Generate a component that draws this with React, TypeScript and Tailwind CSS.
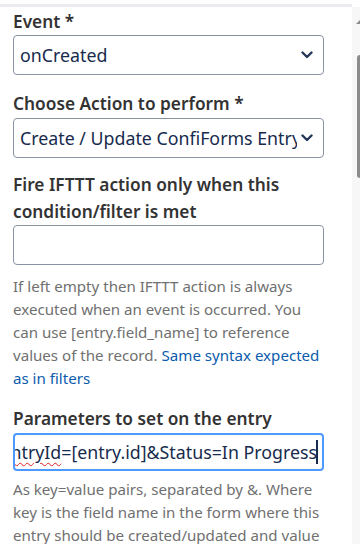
import React from "react";

function Chevron() {
  return (
    <svg width="12" height="8" viewBox="0 0 12 8" className="shrink-0">
      <path d="M1.5 1.5 L6 6 L10.5 1.5" fill="none" stroke="#253858" strokeWidth="2.4" strokeLinecap="round" strokeLinejoin="round" />
    </svg>
  );
}

function Select({ value }: { value: string }) {
  return (
    <div className="flex items-center h-[40px] w-[311px] border border-[#8993a4] rounded-[4px] pl-[6px] pr-[10px] bg-white">
      <span className="flex-1 overflow-hidden whitespace-nowrap text-[17.8px] text-[#172b4d] mr-[4px]">{value}</span>
      <Chevron />
    </div>
  );
}

export default function App() {
  return (
    <div className="relative w-[360px] h-[544px] overflow-hidden bg-white" style={{ fontFamily: '"Noto Sans", "Open Sans", sans-serif' }}>
      <div className="h-[4px]" />
      <div className="h-[3px] w-[352px] bg-[#ebecf0]" />
      <div className="flex">
        <div className="w-[352px] pl-[13px] pt-[3px]">
          <div className="text-[17.3px] font-semibold text-[#333333] leading-[24px]">Event *</div>
          <div className="mt-[1px]"><Select value="onCreated" /></div>

          <div className="mt-[17px] text-[17.3px] font-semibold text-[#333333] leading-[24px]">Choose Action to perform *</div>
          <div className="mt-[2px]"><Select value="Create / Update ConfiForms Entry" /></div>

          <div className="mt-[13px] w-[320px] text-[17.3px] font-semibold text-[#333333] leading-[27px]">Fire IFTTT action only when this condition/filter is met</div>
          <div className="mt-[0px] h-[40px] w-[311px] border border-[#8993a4] rounded-[4px] bg-white" />

          <div className="mt-[10px] w-[312px] text-[15.1px] text-[#707070] leading-[23px]">
            If left empty then IFTTT action is always executed when an event is occurred. You can use [entry.field_name] to reference values of the record.{" "}
            <span className="text-[#0b5cad]">Same syntax expected as in filters</span>
          </div>

          <div className="mt-[17px] text-[17.3px] font-semibold text-[#333333] leading-[24px]">Parameters to set on the entry</div>
          <div className="mt-[2px] flex items-center justify-end h-[38px] w-[311px] border-2 border-[#4c9aff] rounded-[4px] bg-white overflow-hidden pr-[4px]">
            <span className="whitespace-nowrap text-[17.8px] text-[#172b4d]">
              <span className="underline decoration-wavy decoration-[#e02020] decoration-1 underline-offset-[3px]">parentEntryId</span>=[entry.id]&amp;Status=In Progress
            </span>
            <span className="inline-block shrink-0 w-[2px] h-[24px] bg-[#172b4d] -ml-[1px]" />
          </div>

          <div className="mt-[7px] w-[312px] text-[15.1px] text-[#707070] leading-[23px]">
            As key=value pairs, separated by &amp;. Where key is the field name in the form where this entry should be created/updated and value
          </div>
        </div>
        <div className="relative w-[8px] h-[537px] bg-[#f7f7f7]">
          <div className="absolute left-[4px] top-[13px] w-0 h-0 border-l-[4px] border-l-transparent border-b-[4px] border-b-[#8a8a8a]" />
          <div className="absolute left-[5px] top-[48px] w-[3px] h-[123px] rounded-l-[3px] bg-[#8c8c8c]" />
        </div>
      </div>
    </div>
  );
}
